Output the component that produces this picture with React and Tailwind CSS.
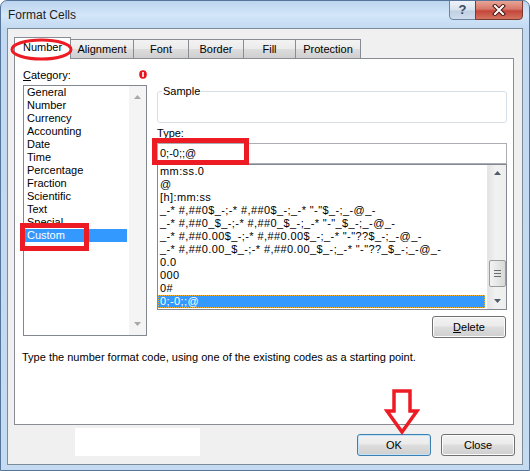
const categories = [
  'General', 'Number', 'Currency', 'Accounting', 'Date', 'Time',
  'Percentage', 'Fraction', 'Scientific', 'Text', 'Special', 'Custom'
];

const formats = [
  'mm:ss.0',
  '@',
  '[h]:mm:ss',
  '_-* #,##0$_-;-* #,##0$_-;_-* "-"$_-;_-@_-',
  '_-* #,##0_$_-;-* #,##0_$_-;_-* "-"_$_-;_-@_-',
  '_-* #,##0.00$_-;-* #,##0.00$_-;_-* "-"??$_-;_-@_-',
  '_-* #,##0.00_$_-;-* #,##0.00_$_-;_-* "-"??_$_-;_-@_-',
  '0.0',
  '000',
  '0#',
  '0;-0;;@'
];

const tabs = [
  { label: 'Alignment', w: 'w-[64px]' },
  { label: 'Font', w: 'w-[56px]' },
  { label: 'Border', w: 'w-[56px]' },
  { label: 'Fill', w: 'w-[53px]' },
  { label: 'Protection', w: 'w-[66px]' }
];

function Arrow({ up, color = '#a8a8a8' }) {
  return (
    <svg width="7" height="4" viewBox="0 0 7 4">
      <polygon points={up ? '0,4 7,4 3.5,0' : '0,0 7,0 3.5,4'} fill={color} />
    </svg>
  );
}

function Button({ children, primary }) {
  return (
    <button
      type="button"
      className={`flex h-[22px] w-[74px] items-center justify-center rounded-[3px] border bg-[linear-gradient(180deg,#f2f2f2_0%,#ebebeb_45%,#dddddd_50%,#cfcfcf_100%)] text-[11px] font-normal ${
        primary ? 'border-[#3c7fb1] shadow-[inset_0_0_0_1px_#c5e3f7]' : 'border-[#707070] shadow-[inset_0_0_0_1px_#fcfcfc]'
      }`}
    >
      {children}
    </button>
  );
}

export default function App() {
  return (
    <div className="relative h-[471px] w-[530px] overflow-hidden rounded-t-[7px] border border-[#55759a] bg-[linear-gradient(180deg,#bcd4ee_0px,#d3e6f9_14px,#c2d9f1_28px,#c5dbf1_100%)] font-['Liberation_Sans',Arial,sans-serif] text-[11px] text-black">
      {/* title bar */}
      <div className="flex h-[27px] items-center pl-[7px] text-[12px] text-[#1e1e1e]">Format Cells</div>
      <div className="absolute right-[6px] top-[-1px] flex">
        <div className="flex h-[20px] w-[27px] items-center justify-center rounded-bl-[4px] border border-[#6d84a0] bg-[linear-gradient(180deg,#eef3f9_0%,#d7e2ef_50%,#c0d0e3_55%,#cfdcec_100%)] text-[13px] font-bold text-[#3a4a5e]">
          ?
        </div>
        <div className="-ml-px flex h-[20px] w-[48px] items-center justify-center rounded-br-[4px] border border-[#7a3a34] bg-[linear-gradient(180deg,#e8a596_0%,#d7786a_45%,#c4453a_55%,#d4735f_100%)]">
          <svg width="14" height="12" viewBox="0 0 14 12">
            <path d="M3 2 L11 10 M11 2 L3 10" stroke="#4a1512" strokeWidth="4" strokeLinecap="square" />
            <path d="M3 2 L11 10 M11 2 L3 10" stroke="#ffffff" strokeWidth="2" strokeLinecap="square" />
          </svg>
        </div>
      </div>

      {/* client area */}
      <div className="mx-[6px] h-[437px] border border-[#7d8c9b] bg-[#f0f0f0] pl-[6px] pr-[8px] pt-[8px]">
        <div className="flex h-[21px] items-end">
          <div className="relative z-10 -mb-px flex h-[22px] w-[57px] items-center justify-center border-x border-t border-[#898c95] bg-white pb-[2px]">
            Number
          </div>
          {tabs.map((tab) => (
            <div
              key={tab.label}
              className={`-ml-px flex h-[19px] items-center justify-center border-x border-t border-[#898c95] bg-[linear-gradient(180deg,#f3f3f3_0%,#ebebeb_50%,#dddddd_51%,#cfcfcf_100%)] ${tab.w}`}
            >
              {tab.label}
            </div>
          ))}
        </div>

        <div className="h-[367px] border border-[#898c95] bg-white pl-[7px] pt-[10px]">
          <div className="flex">
            <div className="ml-px w-[124px]">
              <div className="h-[13px] leading-[13px]">
                <span className="underline">C</span>ategory:
              </div>
              <div className="mt-[3px] flex h-[251px] border border-[#828790]">
                <div className="flex-1">
                  {categories.map((c) => (
                    <div
                      key={c}
                      className={`ml-px h-[13px] w-[102px] pl-[2px] leading-[13px] ${
                        c === 'Custom' ? 'bg-[#3399ff] text-white' : ''
                      }`}
                    >
                      {c}
                    </div>
                  ))}
                </div>
                <div className="flex w-[17px] flex-col items-center justify-between bg-[#f4f4f4] py-[9px]">
                  <Arrow up />
                  <Arrow />
                </div>
              </div>
            </div>

            <div className="ml-[10px] flex w-[350px] flex-col">
              <div className="relative mt-[22px] h-[32px] rounded-[3px] border border-[#d5dfe5]">
                <span className="absolute left-[4px] top-[-7px] bg-white px-[1px] leading-[13px]">Sample</span>
              </div>
              <div className="mt-[4px] h-[13px] leading-[13px]">
                <span className="underline">T</span>ype:
              </div>
              <div className="mt-[3px] flex h-[21px] items-center border border-[#abadb3] pl-[2px]">0;-0;;@</div>
              <div className="flex h-[146px] border border-[#828790]">
                <div className="flex-1 overflow-hidden">
                  {formats.map((f) => (
                    <div
                      key={f}
                      className={`h-[13px] whitespace-pre pl-[2px] leading-[13px] tracking-[0.4px] ${
                        f === '0;-0;;@' ? 'w-[327px] bg-[#3399ff] text-white outline-1 -outline-offset-1 outline-dotted outline-[#f0b030]' : ''
                      }`}
                    >
                      {f}
                    </div>
                  ))}
                </div>
                <div className="relative flex w-[19px] flex-col items-center justify-between border-l border-[#e6e6e6] bg-[linear-gradient(90deg,#e4e4e4,#f1f1f1_40%,#eeeeee)] py-[6px]">
                  <Arrow up color="#505c6c" />
                  <div className="absolute left-[1px] top-[95px] flex h-[27px] w-[17px] flex-col items-center justify-center gap-[2px] rounded-[2px] border border-[#9b9b9b] bg-[linear-gradient(90deg,#f3f3f3,#e6e6e6_50%,#d8d8d8)]">
                    <div className="h-px w-[7px] bg-[#6c6c6c]" />
                    <div className="h-px w-[7px] bg-[#6c6c6c]" />
                    <div className="h-px w-[7px] bg-[#6c6c6c]" />
                  </div>
                  <Arrow color="#505c6c" />
                </div>
              </div>
              <div className="mt-[6px] mr-px self-end">
                <Button>
                  <span className="underline">D</span>elete
                </Button>
              </div>
            </div>
          </div>
          <div className="mt-[13px] h-[13px] leading-[13px]">
            Type the number format code, using one of the existing codes as a starting point.
          </div>
        </div>

        <div className="-mr-px mt-[9px] flex justify-end gap-[10px]">
          <Button primary>OK</Button>
          <Button>Close</Button>
        </div>
      </div>

      {/* redaction + annotations */}
      <div className="absolute z-20 left-[74px] top-[427px] h-[28px] w-[125px] bg-white" />
      <svg className="absolute z-20 left-[9px] top-[37px]" width="63" height="23" viewBox="0 0 63 23">
        <ellipse cx="31.5" cy="11.5" rx="29.5" ry="9.5" fill="none" stroke="#ed1c24" strokeWidth="3" />
      </svg>
      <svg className="absolute z-20 left-[138px] top-[69px]" width="8" height="9" viewBox="0 0 8 9">
        <ellipse cx="4" cy="4.5" rx="3.8" ry="4.2" fill="#e8141e" />
        <rect x="3.2" y="2" width="1.6" height="5" fill="#ffffff" />
      </svg>
      <div className="absolute z-20 left-[19px] top-[222px] h-[28px] w-[69px] border-[5px] border-[#ed1c24]" />
      <div className="absolute z-20 left-[151px] top-[137px] h-[27px] w-[97px] border-[5px] border-[#ed1c24]" />
      <svg className="absolute z-20 left-[383px] top-[387px]" width="36" height="48" viewBox="0 0 36 48">
        <polygon
          points="10,3 26,3 26,23 33,23 18,44 3,23 10,23"
          fill="none"
          stroke="#ed1c24"
          strokeWidth="3.5"
          strokeLinejoin="miter"
        />
      </svg>
    </div>
  );
}
